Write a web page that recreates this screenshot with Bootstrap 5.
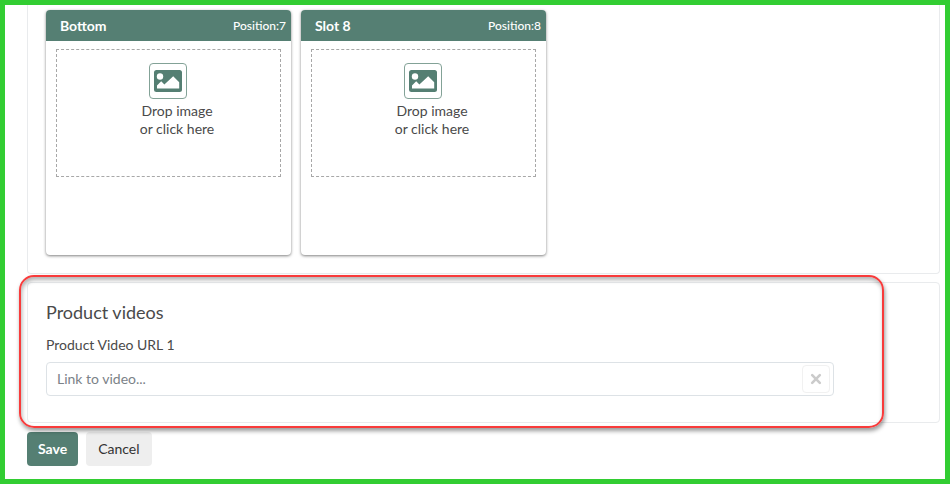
<!DOCTYPE html>
<html lang="en">
<head>
<meta charset="utf-8">
<meta name="viewport" content="width=device-width, initial-scale=1">
<title>Product media</title>
<link href="https://cdn.jsdelivr.net/npm/bootstrap@5.3.0/dist/css/bootstrap.min.css" rel="stylesheet">
<style>
  :root { --brand: #557f73; --line: #e9ebed; }
  body { font-family: Lato, "Liberation Sans", sans-serif; font-size: 14px; line-height: 18px; color: #4a4a4a; }
  .frame { border: 5px solid #32cd32; padding: 0 5px 13px 22px; }
  .panel { border: 1px solid var(--line); border-radius: 4px; padding: 18px; }
  .panel-images { border-top: 0; border-radius: 0 0 4px 4px; padding-top: 5px; }
  .slots { gap: 10px; }
  .slot { width: 245px; min-height: 245px; border-radius: 4px; overflow: hidden; box-shadow: 0 1px 3px rgba(0, 0, 0, .5); }
  .slot-head { background: var(--brand); color: #fff; padding: 7px 5px 6px 14px; }
  .slot-title { font-size: 14px; line-height: 18px; font-weight: 700; }
  .slot-pos { font-size: 12px; font-weight: 500; }
  .drop { margin: 8px 10px; min-height: 128px; padding-top: 13px; border: 1px dashed #a8a8a8; }
  .pick { width: 38px; height: 36px; padding: 0; border: 1px solid #83a297; border-radius: 4px; background: #fff; color: var(--brand); }
  .pick { margin-right: 1px; }
  .drop-text { padding-left: 17px; margin-top: 3px; }
  .highlight { position: absolute; inset: -8px 55px -6px -9px; border: 2px solid #f83b3b; border-radius: 15px; pointer-events: none;
    box-shadow: 1px 3px 4px rgba(0, 0, 0, .4), inset 1px 3px 4px rgba(0, 0, 0, .3); }
  .video-title { font-size: 18px; line-height: 22px; font-weight: 400; margin-bottom: 12px; }
  .video-label { line-height: 20px; margin-bottom: 7px; }
  .video-field { border: 1px solid #dde2e6; border-radius: 4px; padding: 2px 3px; margin-right: 87px; margin-bottom: 8px; }
  .video-field input { font-family: inherit; font-size: 14px; line-height: 20px; padding: 3px 7px; color: #4a4a4a; }
  .video-field input::placeholder { color: #7b8288; }
  .clear { width: 28px; height: 28px; padding: 0; border: 1px solid #f1f1f1; border-radius: 4px; background: #fff; color: #cbcbcb; }
  .actions { gap: 8px; margin-top: 9px; }
  .action { font-size: 14px; line-height: 20px; padding: 6px 10px; border-radius: 4px; border: 1px solid transparent; }
  .action-save { background: var(--brand); color: #fff; font-weight: 700; }
  .action-cancel { background: #eee; color: #333; padding-inline: 11px; }
</style>
</head>
<body>
<main class="frame min-vh-100 d-flex flex-column">
  <form class="d-flex flex-column">
    <section class="panel panel-images">
      <div class="slots d-flex flex-wrap">
        <article class="slot bg-white">
          <header class="slot-head d-flex justify-content-between align-items-center">
            <h2 class="slot-title mb-0">Bottom</h2><span class="slot-pos">Position:7</span>
          </header>
          <div class="drop text-center">
            <button type="button" class="pick d-inline-flex align-items-center justify-content-center" aria-label="Choose image for Bottom">
              <svg width="30" height="22" viewBox="0 0 30 22" aria-hidden="true"><rect x="1" width="28" height="22" rx="2.5" fill="currentColor"/><circle cx="7" cy="6.5" r="3.2" fill="#fff"/><path d="M4 18.5v-3l4.2-4.2 3.2 3.2 8.8-8.2 6 6v6.2z" fill="#fff"/></svg>
            </button>
            <div class="drop-text">Drop image<br>or click here</div>
          </div>
        </article>
        <article class="slot bg-white">
          <header class="slot-head d-flex justify-content-between align-items-center">
            <h2 class="slot-title mb-0">Slot 8</h2><span class="slot-pos">Position:8</span>
          </header>
          <div class="drop text-center">
            <button type="button" class="pick d-inline-flex align-items-center justify-content-center" aria-label="Choose image for Slot 8">
              <svg width="30" height="22" viewBox="0 0 30 22" aria-hidden="true"><rect x="1" width="28" height="22" rx="2.5" fill="currentColor"/><circle cx="7" cy="6.5" r="3.2" fill="#fff"/><path d="M4 18.5v-3l4.2-4.2 3.2 3.2 8.8-8.2 6 6v6.2z" fill="#fff"/></svg>
            </button>
            <div class="drop-text">Drop image<br>or click here</div>
          </div>
        </article>
      </div>
    </section>
    <section class="panel position-relative mt-2">
      <h2 class="video-title">Product videos</h2>
      <label class="video-label d-block" for="video-url">Product Video URL 1</label>
      <div class="video-field d-flex align-items-center">
        <input id="video-url" type="url" class="form-control border-0 shadow-none" placeholder="Link to video...">
        <button type="button" class="clear d-flex flex-shrink-0 align-items-center justify-content-center" aria-label="Clear link">
          <svg width="12" height="12" viewBox="0 0 12 12" aria-hidden="true"><path d="M2.2 2.2l7.6 7.6M9.8 2.2l-7.6 7.6" stroke="currentColor" stroke-width="2.6" stroke-linecap="round"/></svg>
        </button>
      </div>
      <div class="highlight"></div>
    </section>
    <div class="actions d-flex">
      <button type="submit" class="btn action action-save">Save</button>
      <button type="button" class="btn action action-cancel">Cancel</button>
    </div>
  </form>
</main>
<script src="https://cdn.jsdelivr.net/npm/bootstrap@5.3.0/dist/js/bootstrap.bundle.min.js"></script>
</body>
</html>
